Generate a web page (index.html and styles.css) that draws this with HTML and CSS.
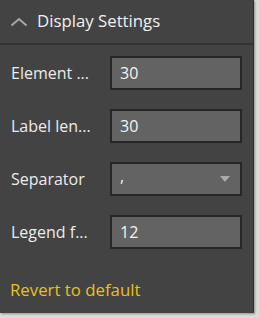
FILE: index.html
```html
<!DOCTYPE html>
<html>
<head>
<meta charset="utf-8">
<link rel="stylesheet" href="styles.css">
</head>
<body>
<div class="panel">
  <div class="header">
    <svg class="chev" width="18" height="10" viewBox="0 0 18 10"><polyline points="1.5,8.5 9,2 16.5,8.5" fill="none" stroke="#a8a8a8" stroke-width="2"/></svg>
    <span class="title">Display Settings</span>
  </div>
  <div class="rows">
    <div class="row">
      <span class="label">Element ...</span>
      <div class="field">30</div>
    </div>
    <div class="row">
      <span class="label">Label len...</span>
      <div class="field">30</div>
    </div>
    <div class="row">
      <span class="label">Separator</span>
      <div class="field select"><span>,</span><svg width="10" height="6" viewBox="0 0 10 6"><polygon points="0,0 10,0 5,6" fill="#aaaaaa"/></svg></div>
    </div>
    <div class="row">
      <span class="label">Legend f...</span>
      <div class="field">12</div>
    </div>
  </div>
  <div class="revert">Revert to default</div>
</div>
</body>
</html>
```
FILE: styles.css
```css
html, body { margin: 0; padding: 0; }
body {
  background: #dcdcd6;
  width: 259px;
  height: 318px;
  overflow: hidden;
  font-family: "Open Sans", "Noto Sans", sans-serif;
}
.panel {
  width: 253px;
  height: 313px;
  background: #434343;
  border-right: 1px solid #2e2e2e;
  box-shadow: 1px 1px 2px rgba(0,0,0,0.35);
  display: flex;
  flex-direction: column;
}
.header {
  border-bottom: 2px solid #333333;
  display: flex;
  align-items: center;
  padding-left: 10px;
  box-sizing: border-box;
  height: 45px;
}
.chev { margin-right: 9px; margin-top: 0; }
.title {
  color: #f0f0f0;
  font-size: 16.8px;
  margin-top: -3px;
}
.rows {
  display: flex;
  flex-direction: column;
  gap: 19px;
  padding-top: 11px;
}
.row {
  display: flex;
  align-items: center;
  height: 34px;
}
.label {
  width: 99px;
  padding-left: 11px;
  color: #ececec;
  font-size: 16px;
  white-space: nowrap;
}
.field {
  height: 30px;
  border: 2px solid #262626;
  background: #636363;
  color: #f4f4f4;
  font-size: 16px;
  display: flex;
  align-items: center;
  padding-left: 8px;
  box-sizing: content-box;
  width: 120px;
}
.select {
  justify-content: space-between;
  padding-right: 10px;
  width: 110px;
}
.select span { margin-top: -6px; }
.revert {
  margin-top: 29px;
  padding-left: 10px;
  color: #e8c11e;
  font-size: 16.8px;
}
```
